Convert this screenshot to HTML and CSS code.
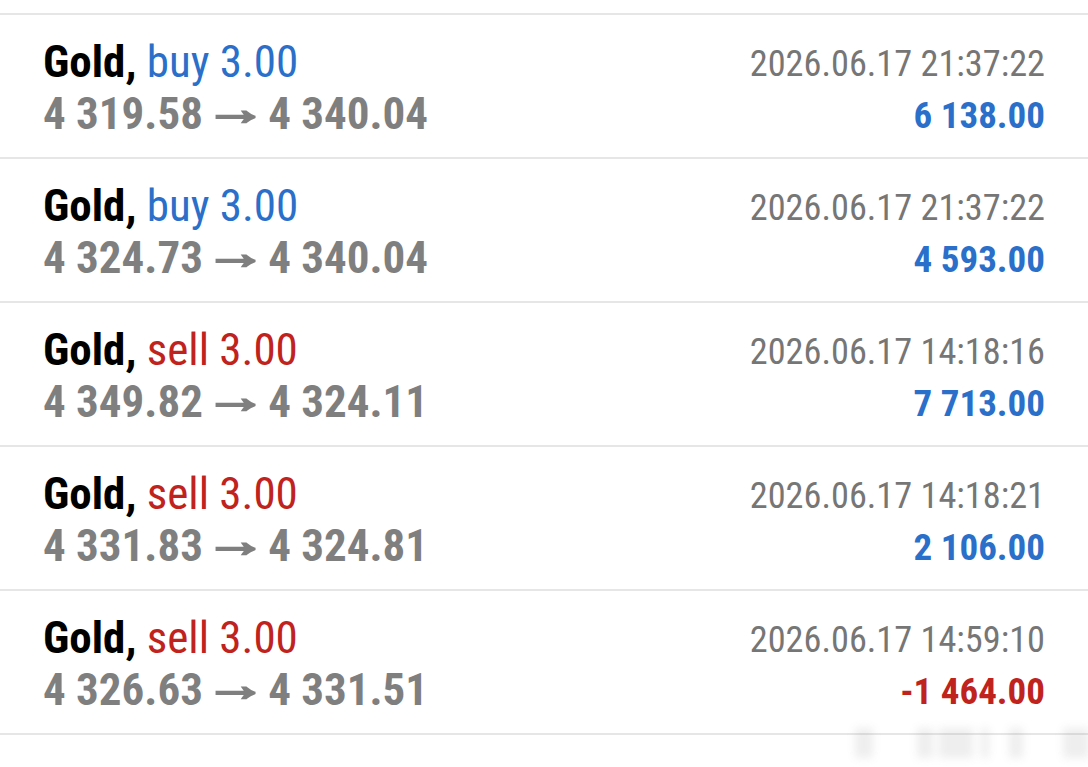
FILE: index.html
```html
<!DOCTYPE html>
<html>
<head>
<meta charset="utf-8">
<link rel="stylesheet" href="styles.css">
</head>
<body>
<div class="list">
  <div class="row">
    <div class="left">
      <div class="title"><b>Gold,</b> <span class="buy">buy 3.00</span></div>
      <div class="prices">4 319.58<span class="arrow"> → </span>4 340.04</div>
    </div>
    <div class="right">
      <div class="date">2026.06.17 21:37:22</div>
      <div class="profit pos">6 138.00</div>
    </div>
  </div>
  <div class="row">
    <div class="left">
      <div class="title"><b>Gold,</b> <span class="buy">buy 3.00</span></div>
      <div class="prices">4 324.73<span class="arrow"> → </span>4 340.04</div>
    </div>
    <div class="right">
      <div class="date">2026.06.17 21:37:22</div>
      <div class="profit pos">4 593.00</div>
    </div>
  </div>
  <div class="row">
    <div class="left">
      <div class="title"><b>Gold,</b> <span class="sell">sell 3.00</span></div>
      <div class="prices">4 349.82<span class="arrow"> → </span>4 324.11</div>
    </div>
    <div class="right">
      <div class="date">2026.06.17 14:18:16</div>
      <div class="profit pos">7 713.00</div>
    </div>
  </div>
  <div class="row">
    <div class="left">
      <div class="title"><b>Gold,</b> <span class="sell">sell 3.00</span></div>
      <div class="prices">4 331.83<span class="arrow"> → </span>4 324.81</div>
    </div>
    <div class="right">
      <div class="date">2026.06.17 14:18:21</div>
      <div class="profit pos">2 106.00</div>
    </div>
  </div>
  <div class="row">
    <div class="left">
      <div class="title"><b>Gold,</b> <span class="sell">sell 3.00</span></div>
      <div class="prices">4 326.63<span class="arrow"> → </span>4 331.51</div>
    </div>
    <div class="right">
      <div class="date">2026.06.17 14:59:10</div>
      <div class="profit neg">-1 464.00</div>
    </div>
  </div>
</div>
<div class="watermark">
  <span class="w1"></span><span class="w2"></span><span class="w3"></span><span class="w4"></span><span class="w5"></span><span class="w6"></span>
</div>
</body>
</html>
```
FILE: styles.css
```css
html, body {
  margin: 0;
  padding: 0;
  background: #fff;
}
body {
  font-family: Roboto, "Liberation Sans", sans-serif;
  font-stretch: condensed;
  width: 1088px;
  height: 767px;
  overflow: hidden;
  position: relative;
}
.list {
  padding-top: 13px;
  border-bottom: 2px solid #e6e6e6;
}
.row {
  display: flex;
  justify-content: space-between;
  border-top: 2px solid #e6e6e6;
  height: 142px;
  padding: 0 43px;
}
.left, .right {
  display: flex;
  flex-direction: column;
}
.right {
  align-items: flex-end;
}
.title {
  font-size: 45px;
  line-height: 50px;
  margin-top: 22px;
  color: #000;
  white-space: nowrap;
}
.title b {
  font-weight: 700;
}
.buy { color: #2a6fc9; }
.sell { color: #c0231d; }
.prices {
  font-size: 45px;
  line-height: 54px;
  font-weight: 700;
  color: #7f7f7f;
  white-space: nowrap;
}
.arrow {
  display: inline-block;
  white-space: pre;
  font-size: 44px;
  line-height: 40px;
  vertical-align: 5px;
  word-spacing: -8.5px;
  margin: 0 9px;
  transform: scaleX(1.4);
  -webkit-text-stroke: 2.5px #7f7f7f;
}
.date {
  font-size: 36.3px;
  line-height: 50px;
  margin-top: 24px;
  color: #767676;
  white-space: nowrap;
}
.profit {
  font-size: 37px;
  line-height: 53px;
  font-weight: 700;
  white-space: nowrap;
}
.pos { color: #2a6fc9; }
.neg { color: #c0231d; }
.watermark {
  position: absolute;
  left: 855px;
  top: 728px;
  height: 30px;
  display: flex;
  filter: blur(4px);
  opacity: 0.12;
}
.watermark span {
  height: 30px;
  background: #777;
}
.w1 { width: 18px; margin-right: 44px; }
.w2 { width: 16px; margin-right: 6px; }
.w3 { width: 34px; margin-right: 8px; }
.w4 { width: 8px; margin-right: 20px; }
.w5 { width: 14px; margin-right: 40px; }
.w6 { width: 26px; }
```
